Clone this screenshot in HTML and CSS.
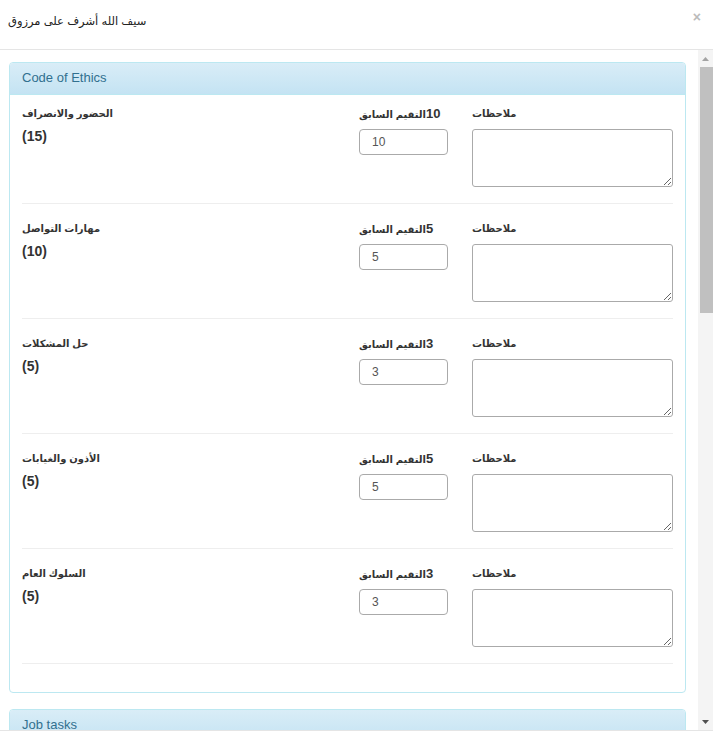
FILE: index.html
```html
<!DOCTYPE html>
<html lang="ar">
<head>
    <meta charset="UTF-8">
    <meta name="viewport" content="width=device-width, initial-scale=1.0">
    <title>تقييم الموظف</title>
    <link rel="stylesheet" href="styles.css">
</head>
<body>
    <div class="modal">
        <div class="modal-header">
            <h4 class="modal-title">سيف الله أشرف على مرزوق</h4>
            <button class="close" type="button">×</button>
        </div>

        <div class="body-wrap">
            <div class="modal-body">
                <div class="panel">
                    <div class="panel-heading">Code of Ethics</div>
                    <div class="panel-body">
                        <div class="eval-row">
                            <div class="item">
                                <div class="item-name">الحضور والانصراف</div>
                                <div class="item-max">(15)</div>
                            </div>
                            <div class="field">
                                <label><span dir="rtl"><span class="num">10</span>التقيم السابق</span></label>
                                <input class="form-control" type="text" value="10">
                            </div>
                            <div class="field">
                                <label>ملاحظات</label>
                                <textarea class="form-control notes"></textarea>
                            </div>
                        </div>

                        <div class="eval-row">
                            <div class="item">
                                <div class="item-name">مهارات التواصل</div>
                                <div class="item-max">(10)</div>
                            </div>
                            <div class="field">
                                <label><span dir="rtl"><span class="num">5</span>التقيم السابق</span></label>
                                <input class="form-control" type="text" value="5">
                            </div>
                            <div class="field">
                                <label>ملاحظات</label>
                                <textarea class="form-control notes"></textarea>
                            </div>
                        </div>

                        <div class="eval-row">
                            <div class="item">
                                <div class="item-name">حل المشكلات</div>
                                <div class="item-max">(5)</div>
                            </div>
                            <div class="field">
                                <label><span dir="rtl"><span class="num">3</span>التقيم السابق</span></label>
                                <input class="form-control" type="text" value="3">
                            </div>
                            <div class="field">
                                <label>ملاحظات</label>
                                <textarea class="form-control notes"></textarea>
                            </div>
                        </div>

                        <div class="eval-row">
                            <div class="item">
                                <div class="item-name">الأذون والغيابات</div>
                                <div class="item-max">(5)</div>
                            </div>
                            <div class="field">
                                <label><span dir="rtl"><span class="num">5</span>التقيم السابق</span></label>
                                <input class="form-control" type="text" value="5">
                            </div>
                            <div class="field">
                                <label>ملاحظات</label>
                                <textarea class="form-control notes"></textarea>
                            </div>
                        </div>

                        <div class="eval-row">
                            <div class="item">
                                <div class="item-name">السلوك العام</div>
                                <div class="item-max">(5)</div>
                            </div>
                            <div class="field">
                                <label><span dir="rtl"><span class="num">3</span>التقيم السابق</span></label>
                                <input class="form-control" type="text" value="3">
                            </div>
                            <div class="field">
                                <label>ملاحظات</label>
                                <textarea class="form-control notes"></textarea>
                            </div>
                        </div>
                    </div>
                </div>

                <div class="panel">
                    <div class="panel-heading">Job tasks</div>
                    <div class="panel-body">
                        <div class="eval-row">
                            <div class="item">
                                <div class="item-name">جودة العمل</div>
                                <div class="item-max">(20)</div>
                            </div>
                            <div class="field">
                                <label><span dir="rtl"><span class="num">15</span>التقيم السابق</span></label>
                                <input class="form-control" type="text" value="15">
                            </div>
                            <div class="field">
                                <label>ملاحظات</label>
                                <textarea class="form-control notes"></textarea>
                            </div>
                        </div>
                    </div>
                </div>
            </div>

            <!-- scrollbar (drawn, the screenshot browser hides the native one) -->
            <div class="scrollbar">
                <div class="sb-btn">
                    <svg width="7" height="4" viewBox="0 0 7 4"><polygon points="0,4 3.5,0 7,4" fill="#a3a3a3"/></svg>
                </div>
                <div class="sb-track">
                    <div class="sb-thumb"></div>
                </div>
                <div class="sb-btn">
                    <svg width="7" height="4" viewBox="0 0 7 4"><polygon points="0,0 7,0 3.5,4" fill="#505050"/></svg>
                </div>
            </div>
        </div>

        <div class="modal-footer"></div>
    </div>
</body>
</html>
```

FILE: styles.css
```css
* {
    box-sizing: border-box;
}
html, body {
    margin: 0;
    height: 100%;
}
body {
    font-family: "Liberation Sans", "DejaVu Sans", sans-serif;
    font-size: 13px;
    color: #333;
    background: #fff;
    overflow: hidden;
}
.modal-header {
    height: 50px;
    padding: 13px 8px 0 8px;
    border-bottom: 1px solid #e5e5e5;
    display: flex;
    justify-content: space-between;
    align-items: flex-start;
}
.modal-title {
    margin: 0;
    font-size: 11.5px;
    font-weight: normal;
    line-height: 16px;
    color: #222;
}
.close {
    border: 0;
    background: none;
    padding: 0;
    margin: -2px 4px 0 0;
    font-family: "Liberation Sans", sans-serif;
    font-size: 14px;
    font-weight: bold;
    line-height: 12px;
    color: #bbb;
}
.body-wrap {
    display: flex;
    height: 680px;
}
.modal-body {
    flex: 1;
    overflow: hidden;
    padding: 12px 12px 0 9px;
}
.modal-footer {
    height: 7px;
    border-top: 1px solid #e5e5e5;
}

.scrollbar {
    width: 15px;
    display: flex;
    flex-direction: column;
    background: #f4f4f4;
}
.sb-btn {
    height: 17px;
    display: flex;
    align-items: center;
    justify-content: center;
}
.sb-btn svg {
    display: block;
}
.sb-track {
    flex: 1;
    padding-left: 2px;
}
.sb-thumb {
    height: 246px;
    background: #c0c0c0;
}

.panel {
    border: 1px solid #bce8f1;
    border-radius: 4px;
    margin-bottom: 16px;
    background: #fff;
}
.panel-heading {
    height: 32px;
    padding: 6px 12px 0;
    line-height: 18px;
    font-size: 13px;
    color: #31708f;
    background: linear-gradient(to bottom, #d9edf7 0%, #c4e3f3 100%);
    border-bottom: 1px solid #bce8f1;
    border-radius: 3px 3px 0 0;
}
.panel-body {
    padding: 11px 12px;
}
.eval-row {
    display: grid;
    grid-template-columns: 1fr 89px 201px;
    column-gap: 24px;
    padding-bottom: 16px;
    border-bottom: 1px solid #eee;
    margin-bottom: 17px;
}
.item-name,
.field label {
    display: block;
    height: 16px;
    line-height: 16px;
    margin-bottom: 7px;
    font-size: 10px;
    font-weight: bold;
    color: #333;
    white-space: nowrap;
}
.field label .num {
    font-size: 13px;
}
.item-max {
    margin-top: -1px;
    font-size: 14px;
    font-weight: bold;
    line-height: 16px;
}
.form-control {
    display: block;
    width: 100%;
    height: 26px;
    padding: 4px 12px;
    font-family: "Liberation Sans", sans-serif;
    font-size: 12px;
    color: #555;
    background: #fff;
    border: 1px solid #aaa;
    border-radius: 4px;
}
.notes {
    height: 58px;
    border-radius: 3px;
    resize: vertical;
}
```
